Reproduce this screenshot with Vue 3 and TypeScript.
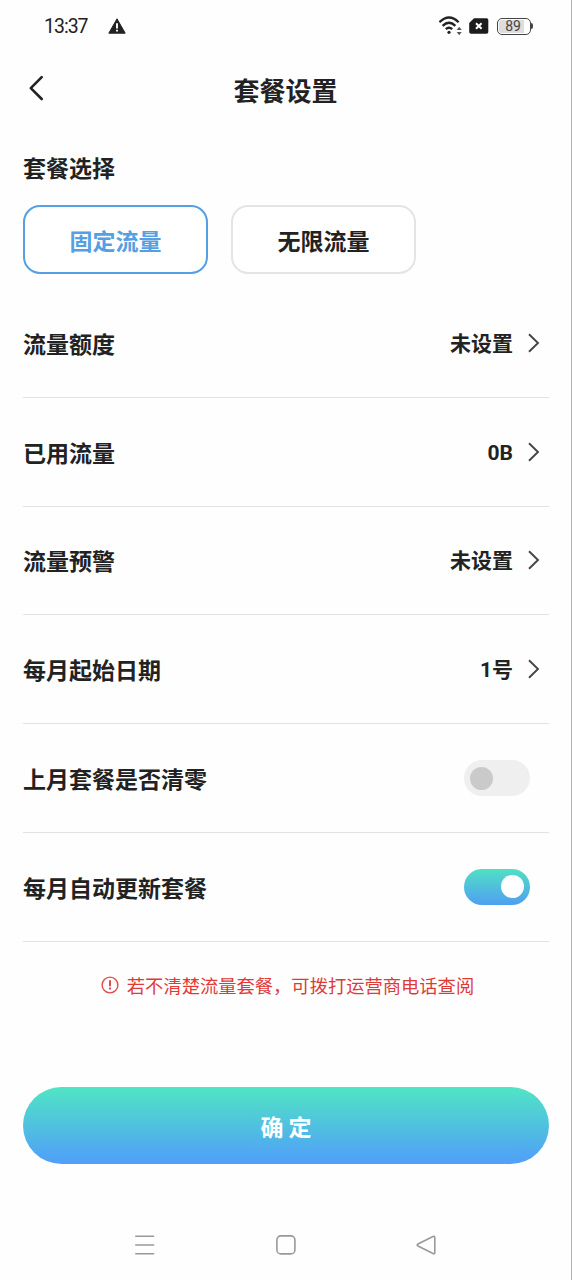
<script setup lang="ts">
import { ref } from 'vue'

interface ValueRow {
  label: string
  value: string
}
interface SwitchRow {
  label: string
  on: boolean
}

const plans: string[] = ['固定流量', '无限流量']
const selected = ref<number>(0)

const rows: ValueRow[] = [
  { label: '流量额度', value: '未设置' },
  { label: '已用流量', value: '0B' },
  { label: '流量预警', value: '未设置' },
  { label: '每月起始日期', value: '1号' },
]

const switches = ref<SwitchRow[]>([
  { label: '上月套餐是否清零', on: false },
  { label: '每月自动更新套餐', on: true },
])
</script>

<template>
  <div class="screen">
    <div class="status">
      <span class="time">13:37</span>
      <svg class="alert" width="18" height="16" viewBox="0 0 18 16">
        <path d="M9 .8 17.2 15.2H.8Z" fill="#222" stroke="#222" stroke-linejoin="round" />
        <path d="M9 5.2v5.2M9 11.8v1.8" stroke="#fff" stroke-width="1.9" />
      </svg>
      <div class="indicators">
        <svg class="wifi" width="24" height="20" viewBox="0 0 24 20" fill="none">
          <g stroke="#222" stroke-width="2.3">
            <path d="M.4 6.2Q10-3.2 19.6 6.2" />
            <path d="M3.6 9.8Q10 3.6 16.4 9.8" />
            <path d="M6.8 13.2Q10 10.2 13.2 13.2" />
          </g>
          <circle cx="10" cy="16.3" r="1.6" fill="#222" />
          <path d="M20.2 10.8 22.7 14h-5ZM20.2 19.2 22.7 16h-5Z" fill="#555" />
        </svg>
        <svg class="sim" width="20" height="16" viewBox="0 0 20 16">
          <path d="M5 .2H17.5Q19.3.2 19.3 2V14Q19.3 15.8 17.5 15.8H2Q.2 15.8.2 14V5Z" fill="#1c1c1c" />
          <path d="m7 5.2 5.6 5.6m0-5.6L7 10.8" stroke="#fff" stroke-width="2" />
        </svg>
        <div class="battery"><span>89</span></div>
        <i class="cap"></i>
      </div>
    </div>

    <header class="head">
      <svg class="back" width="18" height="26" viewBox="0 0 18 26" fill="none">
        <path d="M14.7 2.2 3.8 13.1 14.7 24" stroke="#222" stroke-width="2.6" stroke-linecap="round" stroke-linejoin="round" />
      </svg>
      <h1>套餐设置</h1>
    </header>

    <main>
      <h2>套餐选择</h2>
      <div class="plans">
        <button
          v-for="(plan, i) in plans"
          :key="plan"
          class="plan"
          :class="{ active: selected === i }"
          @click="selected = i"
        >{{ plan }}</button>
      </div>

      <div class="list">
        <div v-for="row in rows" :key="row.label" class="row">
          <span class="label">{{ row.label }}</span>
          <span class="value">{{ row.value }}</span>
          <svg class="chevron" width="12" height="20" viewBox="0 0 12 20" fill="none">
            <path d="M1 1.2 10 10 1 18.8" stroke="#444" stroke-width="1.9" />
          </svg>
        </div>
        <div v-for="item in switches" :key="item.label" class="row">
          <span class="label">{{ item.label }}</span>
          <span class="switch" :class="{ on: item.on }" @click="item.on = !item.on"><i></i></span>
        </div>
      </div>

      <p class="tip">
        <svg width="18" height="18" viewBox="0 0 18 18" fill="none" stroke="#e14b4b">
          <circle cx="9" cy="9" r="7.9" stroke-width="1.4" />
          <path d="M9 4.2v6.1M9 11.6v2" stroke-width="2" />
        </svg>
        <span>若不清楚流量套餐，可拨打运营商电话查阅</span>
      </p>

      <button class="confirm">确 定</button>
    </main>

    <nav>
      <svg width="22" height="22" viewBox="0 0 22 22"><path d="M1.2 2.3h19M1.2 11h19M1.2 19.7h19" /></svg>
      <svg width="22" height="22" viewBox="0 0 22 22"><rect x="1.9" y="1.9" width="18" height="18" rx="4" /></svg>
      <svg width="22" height="22" viewBox="0 0 22 22"><path d="M18 2.5Q19.8 1.7 19.8 3.5V18.5Q19.8 20.3 18 19.5L3 12Q1.4 11 3 10Z" /></svg>
    </nav>
  </div>
</template>

<style>
body {
  margin: 0;
  background: #fefefe;
}
</style>

<style scoped>
.screen {
  box-sizing: border-box;
  width: 572px;
  height: 1280px;
  overflow: hidden;
  display: flex;
  flex-direction: column;
  background: #fefefe;
  border-right: 1px solid #b2b2b2;
  color: #222;
  font-family: "Noto Sans CJK SC", sans-serif;
}
.status {
  height: 52px;
  display: flex;
  align-items: center;
  padding: 0 38px 0 44px;
}
.time {
  width: 64px;
  padding-top: 2px;
  font: 400 19.5px/24px Roboto, sans-serif;
  letter-spacing: -1px;
}
.indicators {
  margin-left: auto;
  display: flex;
  align-items: center;
}
.sim {
  margin-left: 6px;
}
.battery {
  box-sizing: border-box;
  margin-left: 8px;
  width: 34px;
  height: 17px;
  border: 1.5px solid #444;
  border-radius: 5px;
  padding: 1px;
}
.battery span {
  display: block;
  width: 28px;
  height: 13px;
  border-radius: 3px;
  background: linear-gradient(to right, #ddd 88%, #fefefe 88%);
  text-align: center;
  font: 400 14px/12px Roboto, sans-serif;
  color: #444;
}
.cap {
  width: 2px;
  height: 6px;
  background: #444;
  border-radius: 0 2px 2px 0;
}
.head {
  height: 76px;
  display: grid;
  grid-template-columns: 100px 1fr 100px;
  align-items: center;
}
.back {
  margin: -4px 0 0 27px;
}
h1 {
  margin: 0;
  text-align: center;
  font-size: 26px;
  line-height: 38px;
  font-weight: 700;
}
main {
  padding: 22px 22px 0 23px;
}
h2 {
  margin: 0;
  font-size: 23px;
  line-height: 34px;
  font-weight: 700;
}
.plans {
  display: flex;
  gap: 23px;
  margin-top: 21px;
}
.plan {
  box-sizing: border-box;
  width: 185px;
  height: 69px;
  padding: 0;
  border: 2px solid #e4e4e4;
  border-radius: 17px;
  background: #fff;
  color: #222;
  font: 700 23px/34px "Noto Sans CJK SC", sans-serif;
}
.plan.active {
  border-color: #559fe2;
  color: #559fe2;
}
.list {
  margin-top: 15px;
}
.row {
  box-sizing: border-box;
  height: 108.8px;
  display: flex;
  align-items: center;
  padding-right: 9px;
  border-bottom: 1px solid #e2e2e2;
}
.label {
  flex: 1;
  font-size: 23px;
  line-height: 34px;
  font-weight: 700;
}
.value {
  margin-right: 1px;
  padding-top: 2px;
  font: 700 21px/30px Roboto, "Noto Sans CJK SC", sans-serif;
}
.chevron {
  margin-left: 14px;
}
.switch {
  box-sizing: border-box;
  width: 66px;
  height: 36px;
  margin-right: 10px;
  padding: 6px;
  display: flex;
  align-items: center;
  border-radius: 18px;
  background: #efefef;
}
.switch i {
  width: 23px;
  height: 23px;
  border-radius: 50%;
  background: #cacaca;
}
.switch.on {
  justify-content: flex-end;
  background: linear-gradient(#50e0c4, #4f9ff2);
}
.switch.on i {
  background: #fff;
}
.tip {
  margin: 30px 0 0;
  padding-left: 3px;
  display: flex;
  align-items: center;
  justify-content: center;
  gap: 8px;
  font-size: 18.3px;
  line-height: 27px;
  color: #e03a38;
}
.confirm {
  box-sizing: border-box;
  display: block;
  width: 526px;
  height: 77px;
  margin-top: 88px;
  padding: 2px 0 0;
  border: 0;
  border-radius: 39px;
  background: linear-gradient(#50e5c4, #50a1f7 95%);
  color: #fff;
  font: 700 23px/34px "Noto Sans CJK SC", sans-serif;
}
nav {
  margin-top: auto;
  padding: 0 134px 24px;
  display: flex;
  justify-content: space-between;
}
nav svg {
  fill: none;
  stroke: #999;
  stroke-width: 1.6;
}
</style>
